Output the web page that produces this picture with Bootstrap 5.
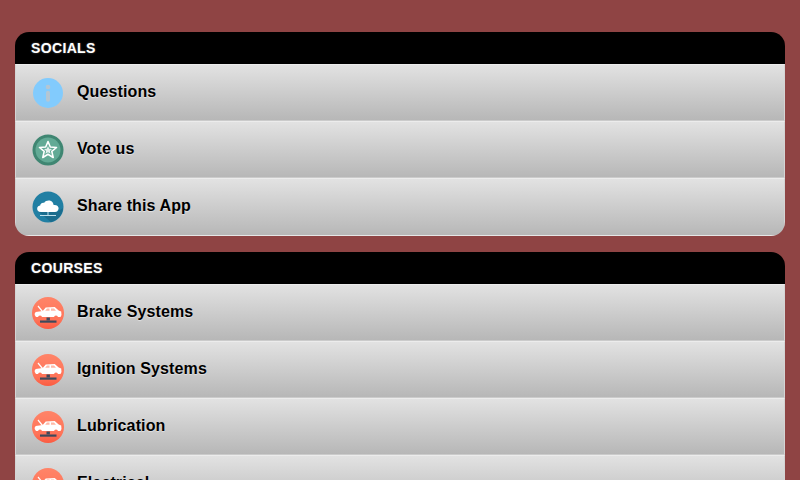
<!DOCTYPE html>
<html lang="en">
<head>
    <meta charset="UTF-8">
    <meta name="viewport" content="width=device-width, initial-scale=1.0">
    <title>Courses</title>
    <link rel="stylesheet" href="https://cdn.jsdelivr.net/npm/bootstrap@5.3.0/dist/css/bootstrap.min.css">
    <style>
        html, body {
            height: 480px;
            overflow: hidden;
        }
        body {
            background-color: #8f4444;
            font-family: "Liberation Sans", Arial, sans-serif;
            padding: 32px 15px 0;
        }
        .menu-group {
            margin-bottom: 16px;
            border-radius: 14px;
            overflow: hidden;
        }
        .menu-title {
            height: 32px;
            background-color: #000;
            color: #fff;
            font-size: 14px;
            font-weight: 700;
            letter-spacing: 0.35px;
            line-height: 32px;
            padding-left: 16px;
            text-shadow: 0 0 2px rgba(255, 255, 255, 0.4);
        }
        .menu-row {
            height: 57px;
            padding-left: 16px;
            gap: 13px;
            color: #000;
            font-size: 16px;
            font-weight: 700;
            letter-spacing: 0.12px;
            background-image: linear-gradient(#e2e2e2, #b7b7b7);
            border-top: 1px solid #ececec;
            border-bottom: 1px solid #cbcbcb;
            border-left: 1px solid #d4d4d4;
            border-right: 1px solid #d4d4d4;
            text-shadow: 0 1px 1px rgba(255, 255, 255, 0.5);
        }
        .menu-row:last-child {
            height: 58px;
            border-bottom-color: #e6e6e6;
        }
        .menu-row svg {
            width: 32px;
            height: 32px;
            flex-shrink: 0;
        }
        .menu-row span {
            padding-bottom: 2px;
        }
    </style>
</head>
<body>
    <!-- Socials -->
    <div class="menu-group">
        <div class="menu-title">SOCIALS</div>
        <div class="menu-row d-flex align-items-center">
            <svg viewBox="0 0 32 32"><circle cx="16" cy="16" r="15" fill="#82cbfd"/><circle cx="16" cy="10" r="2.300" fill="#b4c6d3"/><rect x="14" y="13.700" width="4" height="11" rx="2" fill="#b4c6d3"/></svg>
            <span>Questions</span>
        </div>
        <div class="menu-row d-flex align-items-center">
            <svg viewBox="0 0 32 32"><circle cx="16" cy="16" r="15.500" fill="#3f8672"/><circle cx="16" cy="16" r="12.500" fill="#62aa95"/><polygon points="16,7.500 18.300,13 24.500,13.500 19.800,17.400 21.200,23.500 16,20.300 10.800,23.500 12.200,17.400 7.500,13.500 13.700,13" fill="#62aa95" stroke="#fff" stroke-width="1.600" stroke-linejoin="round"/><polygon points="16,12 17.200,14.800 20,15.100 17.900,17 18.500,19.800 16,18.300 13.500,19.800 14.100,17 12,15.100 14.800,14.800" fill="#e4f2ee"/></svg>
            <span>Vote us</span>
        </div>
        <div class="menu-row d-flex align-items-center">
            <svg viewBox="0 0 32 32"><circle cx="16" cy="16" r="15.500" fill="#217fa3"/><path d="M7 21L25 21 31 17A15.500 15.500 0 0 1 19 31.200z" fill="#1b6d8e"/><path d="M9 21c-3 0-4.200-2.200-3.800-4 .3-1.600 1.500-2.500 3-2.600 .3-2.200 2.200-3.200 4-2.600 1.500-2.800 6.500-3.300 8.500-.4 .6 1 .9 1.800 .9 2.600 3-.5 5.200 1.300 5 3.600-.2 1.900-1.600 3.400-3.600 3.400z" fill="#fff"/><path d="M16 21v3M8 24.500h16" stroke="#bfe0ec" stroke-width="1" fill="none"/></svg>
            <span>Share this App</span>
        </div>
    </div>

    <!-- Courses -->
    <div class="menu-group">
        <div class="menu-title">COURSES</div>
        <div class="menu-row d-flex align-items-center">
            <svg viewBox="0 0 32 32"><use href="#lift"/></svg>
            <span>Brake Systems</span>
        </div>
        <div class="menu-row d-flex align-items-center">
            <svg viewBox="0 0 32 32"><use href="#lift"/></svg>
            <span>Ignition Systems</span>
        </div>
        <div class="menu-row d-flex align-items-center">
            <svg viewBox="0 0 32 32"><use href="#lift"/></svg>
            <span>Lubrication</span>
        </div>
        <div class="menu-row d-flex align-items-center">
            <svg viewBox="0 0 32 32"><use href="#lift"/></svg>
            <span>Electrical</span>
        </div>
    </div>

    <svg width="0" height="0" class="d-block">
        <defs>
            <linearGradient id="liftBg" x1="0" y1="0" x2="0" y2="1">
                <stop offset="0" stop-color="#ff8468"/>
                <stop offset="0.7" stop-color="#ff7459"/>
                <stop offset="1" stop-color="#fb5b41"/>
            </linearGradient>
            <g id="lift">
                <circle cx="16" cy="16" r="16" fill="url(#liftBg)"/>
                <path d="M2.700 16.500l1-1.500 7-1 3-3.500 9-.5 4 3.500 2.500 1 .3 3.500-1 2H4l-1.300-2z" fill="#fff"/>
                <path d="M10.500 14.500L6 9" stroke="#fff" stroke-width="1.200"/>
                <path d="M15 11.500h2.500v2.300h-4.300zM19 11.500h3l2 2.300h-5z" fill="#ffb8a6"/>
                <circle cx="8" cy="20.500" r="2" fill="#ff7459"/>
                <circle cx="24" cy="20.500" r="2" fill="#ff7459"/>
                <rect x="14.500" y="20.500" width="3.400" height="3" fill="#3e4a5c"/>
                <rect x="8" y="23.500" width="16.500" height="2.200" fill="#3e4a5c"/>
            </g>
        </defs>
    </svg>
</body>
</html>
